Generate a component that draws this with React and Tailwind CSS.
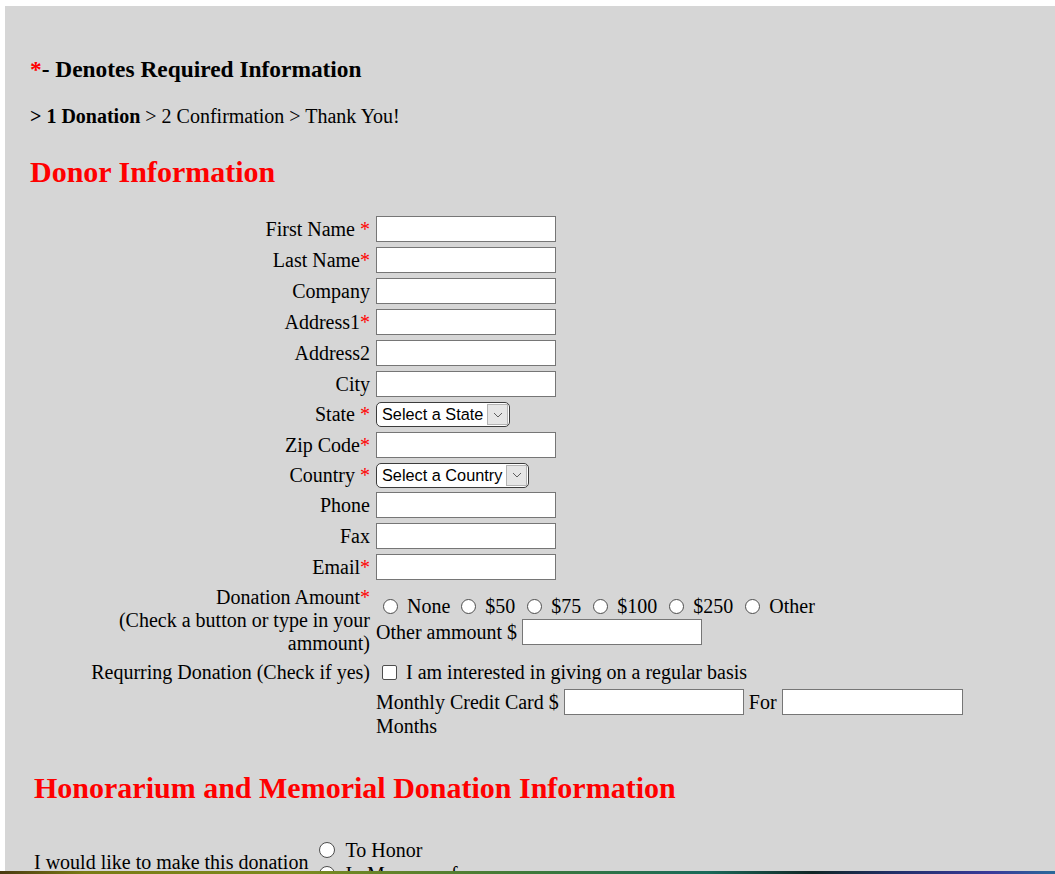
import React from 'react';

const Req = () => <span className="text-[#ff0000]">*</span>;

const TextInput = ({ w = 'w-[180px]' }) => (
  <input type="text" className={`${w} h-[26px] border border-[#767676] bg-white px-1 outline-none shrink-0`} />
);

const Chevron = () => (
  <svg width="10" height="6" viewBox="0 0 10 6" fill="none">
    <path d="M1 1l4 4 4-4" stroke="#5f5f5f" strokeWidth="1" />
  </svg>
);

const FakeSelect = ({ label, w }) => (
  <div className={`${w} h-[25px] flex items-stretch border border-[#3c3c3c] rounded-[5px] bg-white overflow-hidden`}>
    <span className="flex-1 pl-[5px] flex items-center font-['Liberation_Sans',Arial,sans-serif] text-[16.3px] whitespace-nowrap">
      {label}
    </span>
    <span className="w-[21px] my-[1px] mr-[1px] bg-[#e6e6e6] border border-[#b4b4b4] flex items-center justify-center">
      <Chevron />
    </span>
  </div>
);

const Radio = () => (
  <span className="inline-block w-[15px] h-[15px] rounded-full border border-[#4d4d4d] bg-white shrink-0" />
);

const Row = ({ label, children, h = 'h-[26px]' }) => (
  <>
    <div className={`${h} flex items-center justify-end whitespace-nowrap`}>
      <span>{label}</span>
    </div>
    <div className={`${h} flex items-center`}>{children}</div>
  </>
);

const amounts = ['None', '$50', '$75', '$100', '$250', 'Other'];

export default function App() {
  return (
    <div className="h-[874px] flex flex-col overflow-hidden bg-white font-['Liberation_Serif','Times_New_Roman',serif] text-[20px] leading-[23px] text-black">
      <div className="flex-1 min-h-0 pl-[5px] pt-[6px]">
        <div className="h-full bg-[#d6d6d6] overflow-hidden pl-[25px] pt-[50px]">
          {/* Header */}
          <div className="text-[23.4px] leading-[27px] font-bold">
            <span className="text-[#ff0000]">*</span>- Denotes Required Information
          </div>
          <div className="mt-[22px]">
            <b>&gt; 1 Donation</b> &gt; 2 Confirmation &gt; Thank You!
          </div>
          <h2 className="mt-[26px] text-[30px] leading-[35px] font-bold text-[#ff0000]">Donor Information</h2>

          {/* Donor form */}
          <div className="mt-[27px] ml-[57px] grid grid-cols-[283px_590px] gap-x-[6px] gap-y-[5px]">
            <Row label={<>First Name <Req /></>}><TextInput /></Row>
            <Row label={<>Last Name<Req /></>}><TextInput /></Row>
            <Row label="Company"><TextInput /></Row>
            <Row label={<>Address1<Req /></>}><TextInput /></Row>
            <Row label="Address2"><TextInput /></Row>
            <Row label="City"><TextInput /></Row>
            <Row label={<>State <Req /></>} h="h-[25px]"><FakeSelect label="Select a State" w="w-[134px]" /></Row>
            <Row label={<>Zip Code<Req /></>}><TextInput /></Row>
            <Row label={<>Country <Req /></>} h="h-[24px]"><FakeSelect label="Select a Country" w="w-[153px]" /></Row>
            <Row label="Phone"><TextInput /></Row>
            <Row label="Fax"><TextInput /></Row>
            <Row label={<>Email<Req /></>}><TextInput /></Row>

            <div className="text-right pt-[1px] -mb-[1px]">
              Donation Amount<Req />
              <br />
              (Check a button or type in your ammount)
            </div>
            <div className="flex flex-col justify-center">
              <div className="flex items-center h-[24px]">
                {amounts.map((a, i) => (
                  <span key={a} className={`flex items-center ${i === 0 ? 'ml-[7px]' : i === 1 ? 'ml-[11px]' : 'ml-[12px]'}`}>
                    <Radio />
                    <span className="ml-[9px]">{a}</span>
                  </span>
                ))}
              </div>
              <div className="flex items-center h-[26px] mt-[1px]">
                <span className="mr-[5px]">Other ammount $</span>
                <TextInput />
              </div>
            </div>

            <Row label="Requrring Donation (Check if yes)">
              <span className="ml-[6px] w-[15px] h-[15px] border border-[#4d4d4d] rounded-[2px] bg-white shrink-0" />
              <span className="ml-[9px]">I am interested in giving on a regular basis</span>
            </Row>

            <div />
            <div className="-mt-[1px]">
              <div className="flex items-center h-[26px]">
                <span className="mr-[5px]">Monthly Credit Card $</span>
                <TextInput />
                <span className="ml-[5px] mr-[5px]">For</span>
                <TextInput w="w-[181px]" />
              </div>
              <div>Months</div>
            </div>
          </div>

          {/* Honorarium */}
          <div className="ml-[4px]">
            <h2 className="mt-[32px] text-[30px] leading-[35px] font-bold text-[#ff0000]">
              Honorarium and Memorial Donation Information
            </h2>
            <div className="mt-[33px] flex items-center">
              <span className="whitespace-nowrap">I would like to make this donation</span>
              <div className="ml-[11px] flex flex-col">
                <div className="flex items-center h-[24px]">
                  <span className="inline-block w-[16px] h-[16px] rounded-full border border-[#4d4d4d] bg-white" />
                  <span className="ml-[10px]">To Honor</span>
                </div>
                <div className="flex items-center h-[24px]">
                  <span className="inline-block w-[16px] h-[16px] rounded-full border border-[#4d4d4d] bg-white" />
                  <span className="ml-[10px]">In Memory of</span>
                </div>
              </div>
            </div>
          </div>
        </div>
      </div>
      <div className="h-[3px] shrink-0 bg-[linear-gradient(90deg,#4a3a12_0%,#7a7a14_8%,#7d8a1e_28%,#3f7a3a_50%,#1a6a5a_67%,#112626_77%,#22306a_85%,#3a3a9a_94%,#2a6a9a_100%)]" />
    </div>
  );
}
